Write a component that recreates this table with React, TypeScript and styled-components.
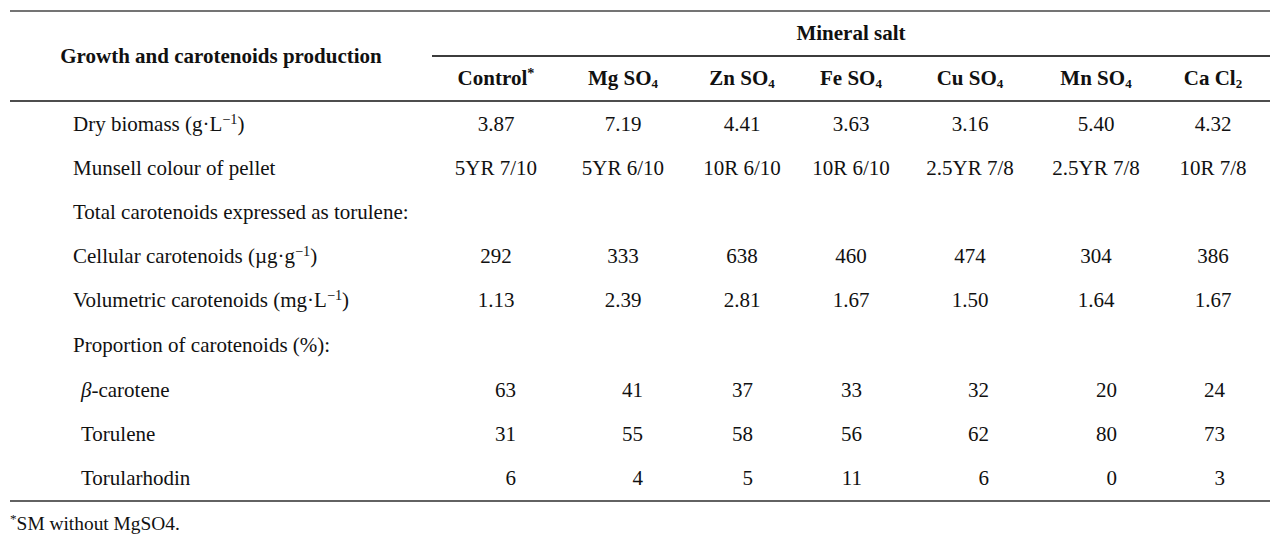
import React from "react";
import styled, { createGlobalStyle } from "styled-components";

const GlobalStyle = createGlobalStyle`
  html, body {
    margin: 0;
    padding: 0;
    background: #ffffff;
  }
  body {
    font-family: "Liberation Serif", "Times New Roman", serif;
    color: #111111;
  }
`;

type Col = { head: React.ReactNode; width: number; pad: number };

const Sub = styled.sub`
  font-size: 0.62em;
  line-height: 0;
  vertical-align: -0.25em;
`;

const Sup = styled.sup`
  font-size: 0.68em;
  line-height: 0;
  vertical-align: 0.5em;
`;

const Greek = styled.i`
  font-style: italic;
`;

const columns: Col[] = [
  { head: <>Control<Sup>*</Sup></>, width: 128, pad: 44 },
  { head: <>Mg SO<Sub>4</Sub></>, width: 126, pad: 43 },
  { head: <>Zn SO<Sub>4</Sub></>, width: 112, pad: 45 },
  { head: <>Fe SO<Sub>4</Sub></>, width: 106, pad: 42 },
  { head: <>Cu SO<Sub>4</Sub></>, width: 132, pad: 47 },
  { head: <>Mn SO<Sub>4</Sub></>, width: 120, pad: 39 },
  { head: <>Ca Cl<Sub>2</Sub></>, width: 114, pad: 45 },
];

const LABEL_W = 422;
const template = `${LABEL_W}px ${columns.map((c) => `${c.width}px`).join(" ")}`;

type RowData = {
  label: React.ReactNode;
  values?: string[];
  kind: "dec" | "int" | "none";
  sub?: boolean;
  tall?: boolean;
};

const rows: RowData[] = [
  {
    label: <>Dry biomass (g·L<Sup>−1</Sup>)</>,
    values: ["3.87", "7.19", "4.41", "3.63", "3.16", "5.40", "4.32"],
    kind: "dec",
  },
  {
    label: "Munsell colour of pellet",
    values: ["5YR 7/10", "5YR 6/10", "10R 6/10", "10R 6/10", "2.5YR 7/8", "2.5YR 7/8", "10R 7/8"],
    kind: "dec",
  },
  { label: "Total carotenoids expressed as torulene:", kind: "none" },
  {
    label: <>Cellular carotenoids (µg·g<Sup>−1</Sup>)</>,
    values: ["292", "333", "638", "460", "474", "304", "386"],
    kind: "dec",
  },
  {
    label: <>Volumetric carotenoids (mg·L<Sup>−1</Sup>)</>,
    values: ["1.13", "2.39", "2.81", "1.67", "1.50", "1.64", "1.67"],
    kind: "dec",
  },
  { label: "Proportion of carotenoids (%):", kind: "none", tall: true },
  {
    label: <><Greek>β</Greek>-carotene</>,
    values: ["63", "41", "37", "33", "32", "20", "24"],
    kind: "int",
    sub: true,
  },
  {
    label: "Torulene",
    values: ["31", "55", "58", "56", "62", "80", "73"],
    kind: "int",
    sub: true,
  },
  {
    label: "Torularhodin",
    values: ["6", "4", "5", "11", "6", "0", "3"],
    kind: "int",
    sub: true,
  },
];

const Page = styled.div`
  padding: 10px 12px 0 10px;
`;

const Table = styled.div`
  width: 1260px;
  border-top: 2px solid #747474;
  border-bottom: 2px solid #626262;
  font-size: 21px;
`;

const Header = styled.div`
  display: grid;
  grid-template-columns: ${LABEL_W}px 1fr;
  border-bottom: 2px solid #4e4e4e;
  font-weight: bold;
`;

const HeadTitle = styled.div`
  display: flex;
  align-items: center;
  justify-content: center;
`;

const SaltGroup = styled.div`
  display: flex;
  flex-direction: column;
`;

const GroupTitle = styled.div`
  height: 43px;
  display: flex;
  align-items: center;
  justify-content: center;
  border-bottom: 2px solid #3c3c3c;
`;

const ColHeads = styled.div`
  display: grid;
  grid-template-columns: ${columns.map((c) => `${c.width}px`).join(" ")};
  height: 43px;
  align-items: center;
`;

const ColHead = styled.div`
  text-align: center;
  white-space: nowrap;
`;

const Row = styled.div<{ $tall?: boolean }>`
  display: grid;
  grid-template-columns: ${template};
  height: ${(p) => (p.$tall ? 46 : 44)}px;
  align-items: center;
`;

const Label = styled.div<{ $sub?: boolean }>`
  padding-left: ${(p) => (p.$sub ? 71 : 63)}px;
  white-space: nowrap;
`;

const Cell = styled.div<{ $int?: boolean; $pad: number }>`
  text-align: ${(p) => (p.$int ? "right" : "center")};
  padding-right: ${(p) => (p.$int ? p.$pad : 0)}px;
  white-space: nowrap;
`;

const Footnote = styled.div`
  margin-top: 11px;
  font-size: 19.4px;
  line-height: 22px;
`;

export default function App() {
  return (
    <>
      <GlobalStyle />
      <Page>
        <Table>
          <Header>
            <HeadTitle>Growth and carotenoids production</HeadTitle>
            <SaltGroup>
              <GroupTitle>Mineral salt</GroupTitle>
              <ColHeads>
                {columns.map((c, i) => (
                  <ColHead key={i}>{c.head}</ColHead>
                ))}
              </ColHeads>
            </SaltGroup>
          </Header>
          {rows.map((r, ri) => (
            <Row key={ri} $tall={r.tall}>
              <Label $sub={r.sub}>{r.label}</Label>
              {r.values?.map((v, i) => (
                <Cell key={i} $int={r.kind === "int"} $pad={columns[i].pad}>
                  {v}
                </Cell>
              ))}
            </Row>
          ))}
        </Table>
        <Footnote>
          <Sup>*</Sup>SM without MgSO4.
        </Footnote>
      </Page>
    </>
  );
}
